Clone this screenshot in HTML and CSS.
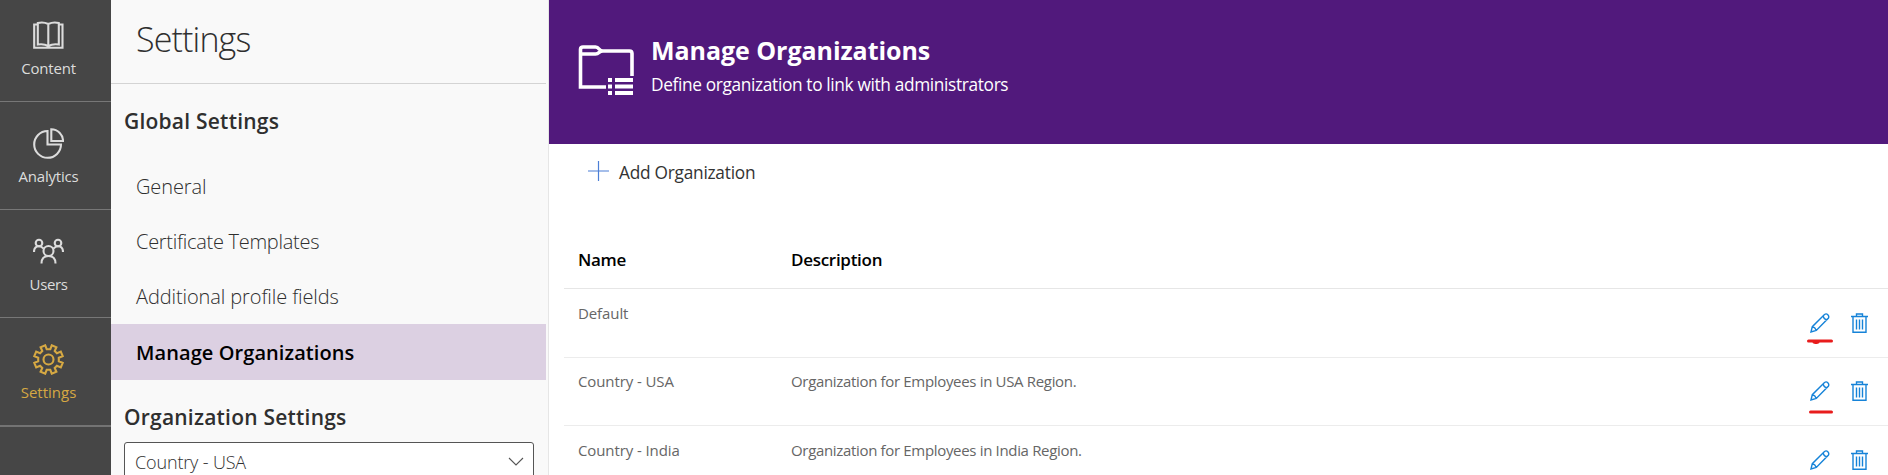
FILE: index.html
```html
<!DOCTYPE html>
<html lang="en">
<head>
<meta charset="utf-8">
<title>Manage Organizations</title>
<link rel="stylesheet" href="styles.css">
</head>
<body>
<svg class="defs" width="0" height="0">
  <symbol id="pencil" viewBox="0 0 20 20"><path d="M1 19l1.300-5.300L14.500 1.500q1.800-1.300 3.300.200t.700 3.300L6.300 17.500zM2.500 13.500q2.800 1 3.800 4M13.200 2.800q.500 3.500 4 4"/></symbol>
  <symbol id="trash" viewBox="0 0 17 20"><path d="M0 3.500h17M5.500 3.500V1h6v2.500M2 3.500v15.700h13V3.500M5.500 6.500v10M8.500 6.500v10M11.500 6.500v10"/></symbol>
</svg>
<div class="app">
  <nav class="rail">
    <a class="rail-item"><svg class="rail-icon" width="31" height="31" viewBox="0 0 31 31"><path d="M4.500 4.500H1.200v23.300h28.300V4.500H26M4.800 24.500V3q5.500-1.500 10.500 1 5-2.500 10.500-1v21.500q-6-1-10.500 1.500-4.500-2.500-10.500-1.500zM15.300 4.500v23"/></svg><span class="t-content">Content</span></a>
    <a class="rail-item"><svg class="rail-icon" width="31" height="31" viewBox="0 0 31 31"><path d="M14.500 3A13.400 13.400 0 1 0 28 16.500H14.500zM18.300 1.200V13H30A11.800 11.800 0 0 0 18.300 1.200z"/></svg><span class="t-content">Analytics</span></a>
    <a class="rail-item"><svg class="rail-icon" width="31" height="31" viewBox="0 0 31 31"><circle cx="15.500" cy="15" r="5"/><circle cx="6" cy="7" r="3.300"/><circle cx="25" cy="7" r="3.300"/><path d="M8.500 27.500q0-7.500 7-7.500t7 7.500M1 16q0-5.700 5-5.700 2.500 0 4.500 2.200M30 16q0-5.700-5-5.700-2.500 0-4.500 2.200"/></svg><span class="t-users">Users</span></a>
    <a class="rail-item active"><svg class="rail-icon" width="31" height="31" viewBox="0 0 31 31"><circle cx="15.500" cy="15.500" r="5"/><path d="M13.700 5.200L12.200 1.300 7.600 3.200 9.300 7.100 7.100 9.300 3.200 7.600 1.300 12.200 5.200 13.700V17.300L1.300 18.800 3.200 23.400 7.100 21.700 9.300 23.900 7.600 27.800 12.200 29.700 13.700 25.800H17.300L18.800 29.700 23.400 27.800 21.700 23.900 23.900 21.700 27.800 23.400 29.700 18.800 25.800 17.300V13.700L29.700 12.200 27.800 7.600 23.900 9.300 21.700 7.100 23.400 3.200 18.800 1.300 17.300 5.200z"/></svg><span>Settings</span></a>
  </nav>
  <aside class="sidebar">
    <h1 class="side-title">Settings</h1>
    <h2 class="group">Global Settings</h2>
    <ul class="menu">
      <li>General</li>
      <li class="tight">Certificate Templates</li>
      <li>Additional profile fields</li>
      <li class="selected">Manage Organizations</li>
    </ul>
    <h2 class="group">Organization Settings</h2>
    <div class="select"><span>Country - USA</span><svg class="chevron" width="16" height="9" viewBox="0 0 16 9"><path d="M1 1l7 7 7-7"/></svg></div>
  </aside>
  <main class="main">
    <header class="banner">
      <svg class="folder" width="56" height="51" viewBox="0 0 56 51"><path class="outline" d="M28 42H2.500V4.500Q2.500 2 5 2h12.500q2 0 3.500 2t4 2h26.500q2.500 0 2.500 2.500V31M2.500 9h15q2 0 3.500-1.500T25 6"/><path class="solid" d="M30 33h4v4h-4zM30 39.500h4v4h-4zM30 46h4v4h-4zM37 33h18v4H37zM37 39.500h18v4H37zM37 46h18v4H37z"/></svg>
      <div class="banner-text"><div class="banner-title">Manage Organizations</div><div class="banner-sub">Define organization to link with administrators</div></div>
    </header>
    <div class="toolbar"><svg class="plus" width="21" height="21" viewBox="0 0 21 21"><path d="M10.500 0v20M0 10h21"/></svg><span>Add Organization</span></div>
    <div class="table">
      <div class="row head"><span>Name</span><span>Description</span></div>
      <div class="row first"><span class="name">Default</span><span></span><div class="actions"><svg class="pencil" width="20" height="20"><use href="#pencil"/></svg><svg class="trash" width="17" height="20"><use href="#trash"/></svg><svg class="mark" width="26" height="5" viewBox="0 0 26 5"><path d="M1.500 2h23M7 3l2 .700 2-.700"/></svg></div></div>
      <div class="row middle"><span class="name">Country - USA</span><span>Organization for Employees in USA Region.</span><div class="actions"><svg class="pencil" width="20" height="20"><use href="#pencil"/></svg><svg class="trash" width="17" height="20"><use href="#trash"/></svg><svg class="mark low" width="24" height="4" viewBox="0 0 24 4"><path d="M1.500 2h21"/></svg></div></div>
      <div class="row last"><span class="name">Country - India</span><span>Organization for Employees in India Region.</span><div class="actions"><svg class="pencil" width="20" height="20"><use href="#pencil"/></svg><svg class="trash" width="17" height="20"><use href="#trash"/></svg></div></div>
    </div>
  </main>
</div>
</body>
</html>
```
FILE: styles.css
```css
* { box-sizing: border-box; }
body { margin: 0; font-family: "Open Sans", sans-serif; overflow: hidden; background: #fff; }
.defs { display: none; }
.app { display: flex; height: 475px; overflow: hidden; }

.rail { flex: none; width: 111px; background: #464646; color: #dcdcdc; font-size: 15px; line-height: 22px; }
.rail-item { display: flex; flex-direction: column; align-items: center; gap: 6px; height: 108px; padding: 26px 14px 0 0; border-bottom: 1px solid #777; }
.rail-item:first-child { height: 102px; padding-top: 20px; }
.rail-item.active { height: 109px; border-bottom: 2px solid #737373; color: #d5a843; }
.rail-icon { flex: none; fill: none; stroke: currentColor; stroke-width: 2.1; }
.t-content { letter-spacing: -0.2px; }
.t-users { letter-spacing: -0.4px; }

.sidebar { flex: none; width: 438px; padding-right: 2px; background: #f9f9f9; border-right: 1px solid #e6e6e6; color: #2f2f2f; }
.side-title { margin: 0; height: 84px; padding-left: 25px; border-bottom: 1px solid #d4d4d4; font-size: 34px; font-weight: 300; line-height: 78px; letter-spacing: -0.85px; }
.group { margin: 22px 0 0; padding-left: 13px; font-size: 21px; font-weight: 600; line-height: 30px; letter-spacing: 0.22px; }
.menu { list-style: none; margin: 23px 0 0; padding: 0; font-size: 20px; font-weight: 300; line-height: 55px; letter-spacing: -0.1px; }
.menu li { height: 55px; padding: 0 0 0 25px; }
.menu .tight { letter-spacing: -0.28px; }
.menu .selected { height: 56px; padding-top: 1px; background: #dcd0e2; color: #000; font-weight: 600; letter-spacing: 0.08px; }
.select { display: flex; justify-content: space-between; align-items: flex-start; height: 42px; margin: 10px 12px 0 13px; padding: 0 9px 0 10px; border: 1px solid #555; border-radius: 3px; background: #fff; font-size: 18px; font-weight: 300; line-height: 39px; letter-spacing: -0.15px; }
.chevron { margin-top: 14px; fill: none; stroke: #555; stroke-width: 1.1; }

.main { flex: 1; min-width: 0; }
.banner { display: flex; height: 144px; padding: 33px 0 0 29px; background: #51197c; color: #fff; }
.folder { flex: none; margin-top: 12px; }
.outline { fill: none; stroke: #fff; stroke-width: 3.6; }
.solid { fill: #fff; }
.banner-text { margin-left: 17px; }
.banner-title { font-size: 25px; font-weight: 700; line-height: 34px; letter-spacing: -0.05px; }
.banner-sub { margin-top: 6px; font-size: 17.3px; line-height: 24px; letter-spacing: -0.35px; }
.toolbar { display: flex; gap: 10px; height: 86px; padding: 17px 0 0 39px; color: #333; font-size: 17.3px; line-height: 24px; letter-spacing: -0.25px; }
.plus { stroke: #4c7fd6; stroke-width: 1.2; }

.table { margin-left: 15px; }
.row { display: grid; grid-template-columns: 213px 1fr 78px; height: 68px; padding: 13px 0 0 14px; border-bottom: 1px solid #ececec; color: #666; font-size: 15px; line-height: 22px; letter-spacing: -0.33px; }
.row.head { height: 59px; padding-top: 18px; border-color: #e6e6e6; color: #000; font-size: 17px; font-weight: 600; line-height: 24px; letter-spacing: -0.28px; }
.row.first { height: 69px; }
.row.middle { padding-top: 12px; }
.name { letter-spacing: -0.1px; }
.actions { position: relative; display: flex; gap: 21px; padding-top: 11px; }
.pencil, .trash { fill: none; stroke: #1683d8; stroke-width: 1.4; }
.mark { position: absolute; left: -3px; top: 37px; fill: none; stroke: #e81c1c; stroke-width: 3; stroke-linecap: round; }
.mark.low { left: -1px; top: 40px; }
```
